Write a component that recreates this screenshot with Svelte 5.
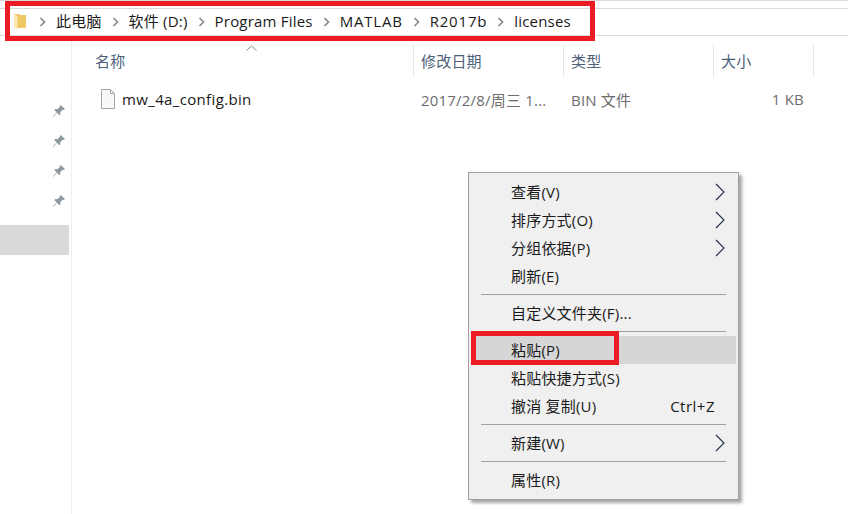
<script lang="ts">
	const crumbs = [
		{ label: '此电脑' },
		{ label: '软件 (D:)' },
		{ label: 'Program Files' },
		{ label: 'MATLAB', wide: true },
		{ label: 'R2017b', wide: true },
		{ label: 'licenses' }
	];
	const columns = [
		{ label: '名称', width: 342 },
		{ label: '修改日期', width: 150 },
		{ label: '类型', width: 150 },
		{ label: '大小', width: 100 }
	];
	const pins = [0, 1, 2, 3];

	type MenuItem = { label?: string; sub?: boolean; hint?: string; active?: boolean; sep?: boolean };
	const menu: MenuItem[] = [
		{ label: '查看(V)', sub: true },
		{ label: '排序方式(O)', sub: true },
		{ label: '分组依据(P)', sub: true },
		{ label: '刷新(E)' },
		{ sep: true },
		{ label: '自定义文件夹(F)...' },
		{ sep: true },
		{ label: '粘贴(P)', active: true },
		{ label: '粘贴快捷方式(S)' },
		{ label: '撤消 复制(U)', hint: 'Ctrl+Z' },
		{ sep: true },
		{ label: '新建(W)', sub: true },
		{ sep: true },
		{ label: '属性(R)' }
	];
</script>

<div class="window">
	<div class="topline"></div>
	<nav class="address">
		<svg class="folder" width="14" height="18" viewBox="0 0 14 18">
			<path d="M1 1h5l1 1h6v13H1z" fill="#eec865" />
			<path d="M1 1l3.500 2v14L1 15z" fill="#fbe9b0" />
		</svg>
		{#each crumbs as c}
			<svg class="chev" width="7" height="10" viewBox="0 0 7 10">
				<path d="M1.500 1l4 4-4 4" fill="none" stroke="#8a8a8a" stroke-width="1.700" />
			</svg>
			<span class:wide={c.wide}>{c.label}</span>
		{/each}
	</nav>

	<div class="main">
		<aside class="side">
			<div class="pins">
				{#each pins as p (p)}
					<svg width="14" height="14" viewBox="0 0 14 14">
						<path d="M8.500 1l4.500 4-1.400 1-1-.3-2.400 2.500.2 2-1 1L5 8.800 1.500 12.800 1 12.300 4.700 8.500 2.300 6l1-1 2 .3 2.600-2.400-.2-1z" fill="#8d979e" />
					</svg>
				{/each}
			</div>
			<div class="selected"></div>
		</aside>

		<section class="files">
			<svg class="sort" width="11" height="6" viewBox="0 0 11 6">
				<path d="M.5 5.500l5-4.500 5 4.500" fill="none" stroke="#8a8a8a" />
			</svg>
			<header class="cols">
				{#each columns as col}
					<div class="col" style="width:{col.width}px">{col.label}</div>
				{/each}
			</header>
			<div class="row">
				<div class="name">
					<svg width="15" height="20" viewBox="0 0 15 20">
						<path d="M.5.500h9l4 4v15H.5z" fill="#f8f8f8" stroke="#a3a3a3" />
						<path d="M9.500.500v4h4" fill="none" stroke="#a3a3a3" />
					</svg>
					<span>mw_4a_config.bin</span>
				</div>
				<div class="date">2017/2/8/周三 1...</div>
				<div class="type">BIN 文件</div>
				<div class="size">1 KB</div>
			</div>
		</section>
	</div>

	<div class="menu">
		{#each menu as m}
			{#if m.sep}
				<div class="sep"></div>
			{:else}
				<div class="item" class:active={m.active}>
					<span>{m.label}</span>
					{#if m.hint}<span class="hint">{m.hint}</span>{/if}
					{#if m.sub}
						<svg class="arrow" width="10" height="18" viewBox="0 0 10 18">
							<path d="M1 1l8 8-8 8" fill="none" stroke="#1f2f46" stroke-width="1.100" />
						</svg>
					{/if}
				</div>
			{/if}
		{/each}
	</div>

	<div class="mark mark-address"></div>
	<div class="mark mark-paste"></div>
</div>

<style>
	:global(body) {
		margin: 0;
		background: #fff;
	}
	.window {
		position: relative;
		width: 848px;
		height: 514px;
		overflow: hidden;
		background: #fff;
		font-family: 'Open Sans', 'Noto Sans CJK SC', sans-serif;
		font-size: 15px;
		letter-spacing: 0.2px;
		color: #1a1a1a;
	}
	.topline {
		height: 1px;
		background: #d9d9d9;
	}
	.address {
		margin-top: 7px;
		border-top: 1px solid #d9d9d9;
		border-bottom: 1px solid #d9d9d9;
		display: flex;
		align-items: center;
		padding: 0 0 3px 13px;
		height: 23px;
		gap: 10px;
		white-space: nowrap;
	}
	.address .wide {
		letter-spacing: 0.8px;
	}
	.folder {
		margin: 3px 2px 0 0;
	}
	.chev {
		margin-top: 3px;
	}
	.main {
		display: flex;
		height: 478px;
	}
	.side {
		width: 71px;
		border-right: 1px solid #f0f0f0;
		padding-top: 68px;
	}
	.pins {
		display: flex;
		flex-direction: column;
		align-items: flex-end;
		gap: 16px;
		padding-right: 5px;
	}
	.selected {
		margin-top: 17px;
		width: 69px;
		height: 30px;
		background: #d9d9d9;
	}
	.files {
		position: relative;
		flex: 1;
	}
	.sort {
		position: absolute;
		left: 174px;
		top: 9px;
	}
	.cols {
		display: flex;
		margin-top: 9px;
		height: 32px;
	}
	.col {
		box-sizing: border-box;
		padding: 6px 0 0 7px;
		border-right: 1px solid #e5e5e5;
		color: #4c607a;
		line-height: 20px;
	}
	.col:first-child {
		padding-left: 23px;
	}
	.row {
		display: flex;
		align-items: center;
		height: 28px;
		margin-top: 8px;
		color: #6d6d6d;
	}
	.name {
		width: 342px;
		display: flex;
		align-items: center;
		gap: 6px;
		padding-left: 29px;
		box-sizing: border-box;
		color: #1a1a1a;
		letter-spacing: 0.35px;
	}
	.date {
		width: 150px;
		padding-left: 7px;
		box-sizing: border-box;
	}
	.type {
		width: 150px;
		padding-left: 7px;
		box-sizing: border-box;
	}
	.size {
		width: 90px;
		text-align: right;
	}
	.menu {
		position: absolute;
		left: 468px;
		top: 172px;
		width: 271px;
		box-sizing: border-box;
		padding: 5px 2px;
		background: #f0f0f0;
		border: 1px solid #a0a0a0;
		box-shadow: 3px 3px 3px rgba(0, 0, 0, 0.35);
	}
	.item {
		position: relative;
		display: flex;
		justify-content: space-between;
		align-items: center;
		height: 28px;
		padding: 0 21px 0 40px;
		line-height: 28px;
	}
	.item.active {
		background: #d6d6d6;
	}
	.hint {
		letter-spacing: 0.5px;
	}
	.arrow {
		position: absolute;
		right: 11px;
		top: 5px;
	}
	.sep {
		height: 1px;
		margin: 4px 10px;
		background: #a0a0a0;
	}
	.mark {
		position: absolute;
		box-sizing: border-box;
		border: 5px solid #ed1c24;
	}
	.mark-address {
		left: 5px;
		top: 1px;
		width: 590px;
		height: 40px;
	}
	.mark-paste {
		left: 471px;
		top: 331px;
		width: 148px;
		height: 34px;
	}
</style>
